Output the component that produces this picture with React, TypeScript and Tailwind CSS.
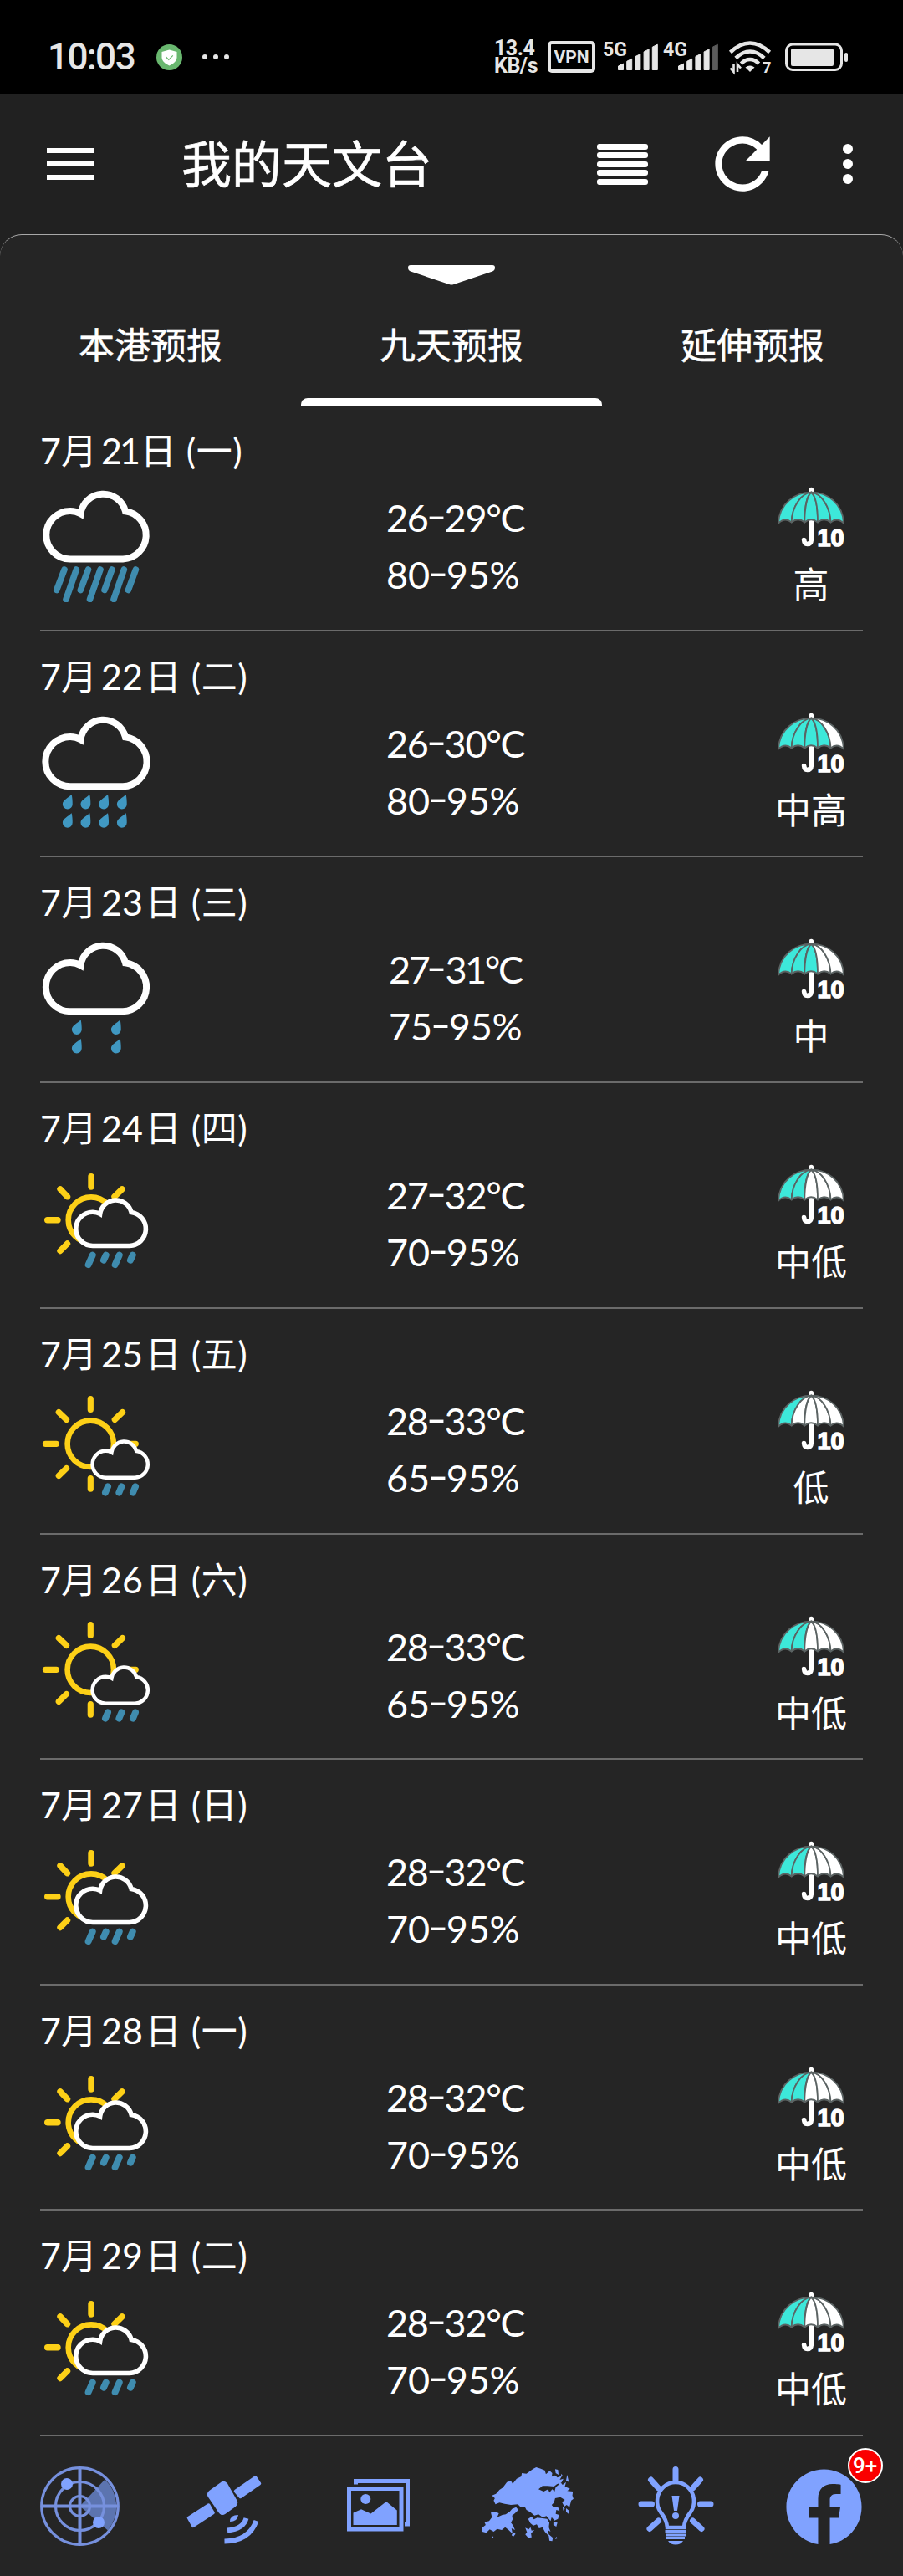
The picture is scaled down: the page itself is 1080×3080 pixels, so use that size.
import React from 'react';
import { FaFacebook } from 'react-icons/fa';
import { MdRefresh } from 'react-icons/md';

type Sky = 'heavy' | 'showers' | 'drizzle' | 'cloudy' | 'sunny';

interface Day {
  day: string;
  week: string;
  temp: string;
  humidity: string;
  sky: Sky;
  chance: string;
  level: number;
}

const days: Day[] = [
  { day: '21', week: '一', temp: '26-29°C', humidity: '80-95%', sky: 'heavy', chance: '高', level: 5 },
  { day: '22', week: '二', temp: '26-30°C', humidity: '80-95%', sky: 'showers', chance: '中高', level: 4 },
  { day: '23', week: '三', temp: '27-31°C', humidity: '75-95%', sky: 'drizzle', chance: '中', level: 3 },
  { day: '24', week: '四', temp: '27-32°C', humidity: '70-95%', sky: 'cloudy', chance: '中低', level: 2 },
  { day: '25', week: '五', temp: '28-33°C', humidity: '65-95%', sky: 'sunny', chance: '低', level: 1 },
  { day: '26', week: '六', temp: '28-33°C', humidity: '65-95%', sky: 'sunny', chance: '中低', level: 2 },
  { day: '27', week: '日', temp: '28-32°C', humidity: '70-95%', sky: 'cloudy', chance: '中低', level: 2 },
  { day: '28', week: '一', temp: '28-32°C', humidity: '70-95%', sky: 'cloudy', chance: '中低', level: 2 },
  { day: '29', week: '二', temp: '28-32°C', humidity: '70-95%', sky: 'cloudy', chance: '中低', level: 2 },
];

const Cloud: React.FC<{ transform?: string; grow?: number }> = ({ transform, grow = 0 }) => {
  const r = 28.75 + grow;
  const bottom = 31 + r * 2;
  return (
    <path
      transform={transform}
      d={`M36 ${bottom} A${r} ${r} 0 0 1 36 31 Q43 31 48.5 34.2 A27.3 27.3 0 0 1 102 31.3 A${r} ${r} 0 0 1 99 ${bottom} Z`}
      fill="#252525"
      stroke="#fff"
      strokeWidth="8"
    />
  );
};

const Drop: React.FC<{ x: number; y: number }> = ({ x, y }) => (
  <path
    transform={`translate(${x} ${y})`}
    d="M0 0C-4 3.500-11 7-10.800 11.500a5.900 5.900 0 0 0 11.800 0C1.200 8 .6 3 0 0z"
    fill="#4098c2"
  />
);

const SkyIcon: React.FC<{ sky: Sky }> = ({ sky }) => (
  <svg className="w-[140px] h-[140px]" viewBox="0 0 140 140">
    {sky === 'heavy' && (
      <>
        <Cloud />
        <path
          d="M29 101L19.700 125.500M43.300 101L31 136.500M57.500 101L48.300 125.500M72 101L59.500 136.500M85.900 101L77 125.500M100.300 101L88 136.500M114.400 101L105.400 125.500"
          stroke="#3f8caf"
          strokeWidth="7.6"
          strokeLinecap="round"
        />
      </>
    )}
    {sky === 'showers' && (
      <>
        <Cloud grow={0.9} />
        {[37.7, 59.3, 81, 102.7].map((x) => (
          <React.Fragment key={x}>
            <Drop x={x} y={100} />
            <Drop x={x} y={122.3} />
          </React.Fragment>
        ))}
      </>
    )}
    {sky === 'drizzle' && (
      <>
        <Cloud grow={0.4} />
        {[48.7, 95.7].map((x) => (
          <React.Fragment key={x}>
            <Drop x={x} y={99.5} />
            <Drop x={x} y={122} />
          </React.Fragment>
        ))}
      </>
    )}
    {sky === 'cloudy' && (
      <>
        <g fill="none" stroke="#fdd017" strokeLinecap="round">
          <circle cx="61" cy="68.7" r="27.3" strokeWidth="6.6" />
          <path
            d="M61 16.800V29M8.700 68.700H21M24 31.800L32.500 40.700M98 31.800L89 40.700M24 105.500L32.500 97"
            strokeWidth="7.4"
          />
        </g>
        <Cloud transform="translate(37.700 37.500) scale(.7)" />
        <path
          d="M62.700 110.700L57.700 122M78.700 110.700L76 116.700M94.700 110.700L89.700 122M110.700 110.700L108 116.700"
          stroke="#3f8caf"
          strokeWidth="8"
          strokeLinecap="round"
        />
      </>
    )}
    {sky === 'sunny' && (
      <>
        <g fill="none" stroke="#fdd017" strokeLinecap="round">
          <circle cx="60.3" cy="66.300" r="27.7" strokeWidth="6.6" />
          <path
            d="M60.300 12.700V25.500M60.300 107.500V120.200M6.400 66.300H19.400M101 66.300H114.300M22.300 28.600L31.500 37.400M98.500 28.600L89.300 37.400M22.300 104.400L31.500 95.500"
            strokeWidth="7.2"
          />
        </g>
        <Cloud transform="translate(58.500 57.600) scale(.555)" />
        <path
          d="M81 117.500L78 124.500M97.400 117.500L94.400 124.500M114 117.500L111 124.500"
          stroke="#3f8caf"
          strokeWidth="8"
          strokeLinecap="round"
        />
      </>
    )}
  </svg>
);

// the five canopy panels, left to right
const panels = [
  'M3 45.500C4 22 23 8.700 42.300 8.700C30 10 19 26 18.700 44.500Q11 38 3 45.500Z',
  'M18.700 44.500C19 26 30 10 42.300 8.700C37 13 34.300 28 34.300 44.500Q26.500 38 18.700 44.500Z',
  'M34.300 44.500C34.300 28 37 13 42.300 8.700C47.500 13 50 28 50 44.500Q42 38 34.300 44.500Z',
  'M50 44.500C50 28 47.500 13 42.300 8.700C54.500 10 65 26 65.500 44.500Q57.500 38 50 44.500Z',
  'M65.500 44.500C65 26 54.500 10 42.300 8.700C61.500 8.700 80 22 81 45.500Q73 38 65.500 44.500Z',
];

const Umbrella: React.FC<{ level: number }> = ({ level }) => (
  <svg className="w-[84px] h-[78px] overflow-visible" viewBox="0 0 84 78">
    <path d="M42.300 5.500V9" stroke="#fff" strokeWidth="5.500" strokeLinecap="round" />
    <path
      d="M42.300 42V65.500Q42 70.500 37.500 70.500Q34 70.500 33.600 65.500"
      fill="none"
      stroke="#fff"
      strokeWidth="5.600"
      strokeLinecap="round"
    />
    {panels.map((d, i) => (
      <path key={i} d={d} fill={i < level ? '#3de8da' : '#fff'} stroke="#5b6363" strokeWidth="1.8" strokeLinejoin="round" />
    ))}
    <text
      x="49.500"
      y="73.200"
      textLength="32"
      lengthAdjust="spacingAndGlyphs"
      fontFamily="Liberation Sans, sans-serif"
      fontWeight="700"
      fontSize="29.500"
      fill="#fff"
      stroke="#fff"
      strokeWidth="1.600"
    >
      10
    </text>
  </svg>
);

// a range such as 26-29°C, drawn with a long raised hyphen
const Range: React.FC<{ value: string; className: string }> = ({ value, className }) => {
  const [low, high] = value.split('-');
  return (
    <p className={className}>
      {low}
      <span className="inline-block w-[20px] text-center tracking-normal scale-x-150 -translate-y-[3px]">-</span>
      {high}
    </p>
  );
};

const DayRow: React.FC<{ item: Day; className: string }> = ({ item, className }) => (
  <div className={`mx-12 border-b-2 border-[#6b6b6b] text-white text-[43px] ${className}`}>
    <div className="flex h-[95px] pt-5 leading-[68px] whitespace-pre">
      <span>7</span>
      <span>月</span>
      <span className={`pl-[5px] pr-[3px] ${item.day === '21' ? 'tracking-[-3px]' : ''}`}>{item.day}</span>
      <span>日</span>
      <span className="pl-[12px] tracking-[0.5px]">({item.week})</span>
    </div>
    <div className="flex">
      <div className="w-[140px] shrink-0">
        <SkyIcon sky={item.sky} />
      </div>
      <div className={`flex-1 pt-[5px] leading-[68px] text-[45px] ${item.temp.endsWith('1°C') ? 'pl-[277px]' : 'pl-[274px]'}`}>
        <Range value={item.temp} className={item.temp.endsWith('1°C') ? 'tracking-[-2.4px]' : 'tracking-[-1.3px]'} />
        <Range value={item.humidity} className="tracking-[-0.2px]" />
      </div>
      <div className="w-[124px] shrink-0 flex flex-col items-center">
        <Umbrella level={item.level} />
        <p className="mt-[11px] leading-[60px]">{item.chance}</p>
      </div>
    </div>
  </div>
);

const Signal: React.FC<{ label: string; bars: number }> = ({ label, bars }) => (
  <svg className="w-[68px] h-[40px] overflow-visible" viewBox="0 0 68 40">
    <text
      x="0"
      y="18.500"
      textLength="29"
      lengthAdjust="spacingAndGlyphs"
      fontFamily="Roboto, sans-serif"
      fontWeight="700"
      fontSize="23"
      fill="#e6e6e6"
    >
      {label}
    </text>
    {[0, 1, 2, 3, 4].map((i) => (
      <path
        key={i}
        d={`M${18.5 + i * 10.2} 35.500v${-(4.5 + i * 5.7)}l6 -3v${7.5 + i * 5.7}z`}
        fill={i < bars ? '#e6e6e6' : '#5c5c5c'}
        stroke={i < bars ? '#e6e6e6' : '#5c5c5c'}
        strokeWidth="1"
        strokeLinejoin="round"
      />
    ))}
  </svg>
);

const StatusBar = () => (
  <div className="flex items-center h-[112px] bg-black pt-6 text-[#e6e6e6]">
    <span className="ml-[57px] w-[106px] text-[44px] font-medium leading-none tracking-[-1.5px] font-[Roboto,sans-serif]">10:03</span>
    <svg className="ml-6 w-[31px] h-[31px]" viewBox="0 0 31 31">
      <circle cx="15.500" cy="15.500" r="15.500" fill="#69b76f" />
      <path d="M15.500 6.500L24.500 9v6.500c0 4.500-4 7.500-9 10-5-2.500-9-5.500-9-10V9z" fill="#fff" />
      <path d="M11.500 15l3.300 3.300 5-5" fill="none" stroke="#69b76f" strokeWidth="1.200" />
    </svg>
    <div className="flex gap-[7px] ml-6">
      {[0, 1, 2].map((i) => (
        <span key={i} className="w-[6px] h-[6px] rounded-full bg-[#e6e6e6]" />
      ))}
    </div>
    <div className="flex items-center ml-auto mr-[65px] font-[Roboto,sans-serif] font-bold">
      <div className="w-[64px] text-[25px] leading-[21px] tracking-[-0.5px]">
        <p>13.4</p>
        <p>KB/s</p>
      </div>
      <div className="w-[57px] h-[38px] rounded-[5px] border-4 border-[#e6e6e6] flex items-center justify-center text-[21px] leading-none">
        VPN
      </div>
      <div className="flex gap-[4px] ml-[9px]">
        <Signal label="5G" bars={5} />
        <Signal label="4G" bars={4} />
      </div>
      <svg className="ml-[10px] w-[52px] h-[40px] overflow-visible" viewBox="0 0 52 40">
        <g fill="none" stroke="#e6e6e6" strokeWidth="4.600">
          <path d="M2.500 14.500Q14 3.500 26 3.500T49.500 14.500" />
          <path d="M9 21.500Q17 13.500 26 13.500T43 21.500" />
          <path d="M15.500 28Q20 23 26 23T36.500 28" />
        </g>
        <path d="M26 38L20.500 32.500Q26 28.500 31.500 32.500Z" fill="#e6e6e6" />
        <path d="M6.500 29v9l-4-4.500M11 38v-9l4 4.500" fill="none" stroke="#e6e6e6" strokeWidth="2.600" />
        <text x="41" y="38.500" fontFamily="Roboto, sans-serif" fontWeight="700" fontSize="18" fill="#e6e6e6">
          7
        </text>
      </svg>
      <svg className="ml-[16px] w-[76px] h-[34px]" viewBox="0 0 76 34">
        <rect x="1.500" y="2" width="66" height="30.500" rx="7.500" fill="none" stroke="#e6e6e6" strokeWidth="3" />
        <rect x="7" y="7" width="51" height="21" rx="2" fill="#e6e6e6" />
        <rect x="71" y="12" width="4" height="11" rx="2" fill="#e6e6e6" />
      </svg>
    </div>
  </div>
);

const AppBar = () => (
  <div className="flex items-center h-[168px] bg-[#212121] text-white">
    <div className="flex flex-col gap-[10px] ml-14">
      {[0, 1, 2].map((i) => (
        <span key={i} className="w-14 h-[6px] bg-white" />
      ))}
    </div>
    <h1 className="ml-[105px] text-[60px] leading-none [-webkit-text-stroke:0.7px_white]">我的天文台</h1>
    <div className="flex flex-col gap-[3.500px] ml-auto">
      {[0, 1, 2, 3, 4].map((i) => (
        <span key={i} className="w-[61px] h-[7px] rounded-[3px] bg-white" />
      ))}
    </div>
    <MdRefresh className="ml-[64px] w-[98px] h-[98px]" />
    <div className="flex flex-col gap-[6px] ml-[71px] mr-[60px]">
      {[0, 1, 2].map((i) => (
        <span key={i} className="w-3 h-3 rounded-full bg-white" />
      ))}
    </div>
  </div>
);

const tabs = ['本港预报', '九天预报', '延伸预报'];

const Tabs = () => (
  <div className="h-[205px] rounded-t-[26px] border-t border-[#a8a8a8] flex flex-col items-center">
    <svg className="mt-9 w-[104px] h-6 shrink-0" viewBox="0 0 104 24">
      <path d="M3 0H101Q104 0 104 3Q104 6 101 7.500L54 23.200Q52 24 50 23.200L3 7.500Q0 6 0 3Q0 0 3 0Z" fill="#fff" />
    </svg>
    <div className="grid grid-cols-3 w-[1080px] flex-1">
      {tabs.map((tab, i) => (
        <div key={tab} className="flex flex-col items-center text-white text-[43px]">
          <span className="mt-[42px] leading-[60px] [-webkit-text-stroke:0.5px_white]">{tab}</span>
          {i === 1 && <span className="mt-auto w-full h-[9px] rounded-t-[8px] bg-white" />}
        </div>
      ))}
    </div>
  </div>
);

const BottomBar = () => (
  <div className="flex items-start h-[167px] pt-8 text-[#80a2ff]">
    {/* radar */}
    <svg className="ml-[45px] w-[102px] h-[102px]" viewBox="0 0 102 102">
      <path d="M50.500 51.500L80.500 19.500A45 45 0 0 1 84 80.500Z" fill="#5c74b0" />
      <g fill="none" stroke="#7690dd" strokeWidth="3.200">
        <circle cx="50.500" cy="51.500" r="45.800" />
        <circle cx="50.500" cy="51.500" r="29" />
        <circle cx="50.500" cy="51.500" r="12" />
        <path d="M50.500 6V97M5 51.500H96" strokeWidth="4" />
      </g>
      <circle cx="35" cy="25" r="7" fill="currentColor" />
      <circle cx="73" cy="71" r="7" fill="currentColor" />
    </svg>
    {/* satellite */}
    <svg className="ml-[73px] w-[98px] h-[102px]" viewBox="0 0 98 102" fill="currentColor">
      <g stroke="currentColor" strokeWidth="6" strokeLinejoin="round">
        <path d="M32 35.500L46 25.300Q48 24 49.500 26L60.500 45.500Q62 48 60 49.500L47.500 58.500Q45.500 60 44 57.500L31.500 39Q30 37 32 35.500Z" />
        <path d="M61.500 33.500L85.500 17L90.500 24.500L67.500 40.500Z" strokeWidth="3.500" />
        <path d="M5.500 65.500L29.500 50L35 59.500L11 75.300Z" strokeWidth="3.500" />
      </g>
      <path d="M55 70Q55 62 65 62Q64 70 55 70Z" />
      <path d="M74.500 66Q71 79 52 80.500" fill="none" stroke="currentColor" strokeWidth="6" />
      <path d="M86.500 69Q78 93 48.500 93.500" fill="none" stroke="currentColor" strokeWidth="6" />
    </svg>
    {/* gallery */}
    <svg className="ml-[94px] w-[80px] h-[102px]" viewBox="0 0 80 102" fill="currentColor">
      <path d="M13.500 25.500V21.500H75.500V73H72" fill="none" stroke="currentColor" strokeWidth="5" />
      <rect x="5.500" y="30.500" width="62.500" height="48.500" fill="none" stroke="currentColor" strokeWidth="5" />
      <circle cx="25.300" cy="43" r="6" />
      <path d="M10.500 59.500L20 55.200L31.500 60.500L50 46L62.800 56.500V74H10.500Z" />
    </svg>
    {/* territory map */}
    <svg className="ml-[82px] mt-[2px] w-[115px] h-[95px]" viewBox="100 200 335 285" preserveAspectRatio="none" fill="currentColor">
      <path d="M285 215L296 209L312 214L326 220L330 234L343 222L352 230L350 243L362 238L370 246L386 240L378 254L391 250L384 264L368 270L358 278L336 276L318 276L304 288L322 296L338 288L342 300L352 288L360 296L364 280L374 272L380 262L388 272L400 262L396 278L414 286L404 294L424 296L422 310L426 322L418 328L412 352L402 344L394 350L386 334L396 326L380 316L362 320L358 336L350 344L356 352L372 352L378 366L366 362L364 376L376 380L372 394L360 400L350 388L346 402L332 384L318 388L304 378L290 382L276 370L262 362L256 350L242 352L232 342L208 344L186 340L168 336L154 342L148 328L152 320L142 310L156 304L168 290L180 282L194 262L208 258L214 268L228 250L244 242L246 230L262 232L276 222Z" />
      <path d="M226 352L234 362L222 374L212 382L214 396L208 408L216 418L222 434L210 428L214 448L200 434L188 424L176 434L160 430L148 440L134 432L122 444L108 440L108 426L120 416L116 406L132 402L142 388L138 372L152 368L166 374L160 388L178 380L190 378L204 368L212 358Z" />
      <path d="M268 394L280 386L288 396L300 390L318 392L334 394L342 408L340 424L346 440L336 434L340 450L354 462L352 474L342 472L340 456L326 440L318 424L306 428L298 414L286 418L276 410Z" />
      <path d="M258 426L270 432L276 424L280 436L290 434L278 446L280 460L268 462L258 450L264 442ZM356 404L370 408L366 422L356 416ZM362 216L372 218L374 236L364 230ZM384 232L388 240L382 242ZM400 356L410 364L408 376L400 368ZM388 350L396 358L390 364ZM366 458L370 464L362 466ZM404 236L410 262L400 256ZM144 456L148 462L142 462ZM218 442L224 448L216 458L210 452Z" />
    </svg>
    {/* tips */}
    <svg className="ml-[71px] w-[96px] h-[102px]" viewBox="0 0 96 102" fill="none" stroke="currentColor">
      <path
        d="M48 7.500V20.500M7 49H19.500M77.500 49H90M18.500 20L27.500 30M77.500 20L68.500 30M17 78.500L27.500 69M79 78.500L68.500 69"
        strokeWidth="7"
        strokeLinecap="round"
      />
      <path d="M38 77Q37.500 68 30 58.500A22 22.500 0 1 1 66 58.500Q58.500 68 58 77Z" strokeWidth="4.600" />
      <path d="M35.500 81.500H60.500M36 86H60M37 89.500H59" strokeWidth="2.800" />
      <path d="M39 93H57Q54 97.500 48 97.500T39 93Z" fill="currentColor" stroke="none" />
      <path d="M43.500 39H52.500L50 57H46Z" fill="currentColor" stroke="none" />
      <circle cx="48" cy="63" r="4" fill="currentColor" stroke="none" />
    </svg>
    <div className="relative ml-[83px] mt-[5.500px]">
      <FaFacebook className="w-[93px] h-[93px]" />
      <span className="absolute -top-[23.500px] left-[74.500px] w-[42px] h-[42px] rounded-full border-2 border-white bg-[#fa0000] text-white text-[26px] font-medium leading-none flex items-center justify-center font-[Roboto,sans-serif]">
        9+
      </span>
    </div>
  </div>
);

const App: React.FC = () => (
  <div className="w-[1080px] h-[3080px] overflow-hidden bg-[#212121] font-[Lato,'Noto_Sans_CJK_SC',sans-serif]">
    <StatusBar />
    <AppBar />
    <div className="bg-[#252525] rounded-t-[26px]">
      <Tabs />
      {days.map((item, i) => (
        <DayRow key={item.day} item={item} className={i < 5 ? 'h-[270px]' : i % 2 ? 'h-[269px]' : 'h-[270px]'} />
      ))}
      <BottomBar />
    </div>
  </div>
);

export default App;
